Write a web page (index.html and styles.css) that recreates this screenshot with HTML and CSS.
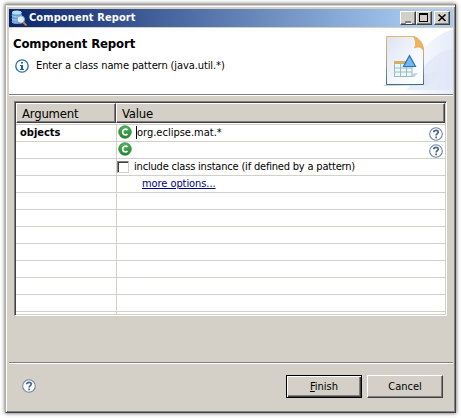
FILE: index.html
```html
<!DOCTYPE html>
<html lang="en">
<head>
<meta charset="utf-8">
<title>Component Report</title>
<link rel="stylesheet" href="styles.css">
</head>
<body>
<svg class="defs" width="0" height="0" aria-hidden="true">
  <defs>
    <linearGradient id="green" x2="0" y2="1"><stop stop-color="#55b35b"/><stop offset="1" stop-color="#238831"/></linearGradient>
    <linearGradient id="paper" x2="1" y2="1"><stop stop-color="#dce3f2"/><stop offset=".6" stop-color="#f6f8fc"/><stop offset="1" stop-color="#fff"/></linearGradient>
    <linearGradient id="edge" x2="0" y2="1"><stop stop-color="#e9b66c"/><stop offset=".5" stop-color="#a8a890"/><stop offset="1" stop-color="#3d7078"/></linearGradient>
    <linearGradient id="sweep" x2="1" y2="0"><stop stop-color="#fff"/><stop offset="1" stop-color="#d9e2f6"/></linearGradient>
    <linearGradient id="shade" x2="1" y2="0"><stop stop-color="#c5c5df"/><stop offset="1" stop-color="#e6ebf8" stop-opacity="0"/></linearGradient>
    <symbol id="class" viewBox="0 0 14 14">
      <circle cx="7" cy="7" r="6.3" fill="url(#green)" stroke="#2b8038" stroke-width=".7"/>
      <path d="M9.4 5C8.4 3.7 4.7 3.6 4.7 7s3.7 3.300 4.700 2" fill="none" stroke="#fff" stroke-width="1.7"/>
    </symbol>
    <symbol id="help" viewBox="0 0 14 14">
      <circle cx="7" cy="7" r="6.300" fill="#fff" stroke="#6d84a5" stroke-width="1.100"/>
      <path d="M4.800 5.300C4.900 2.700 9.300 2.700 9.300 5.100 9.300 6.600 7.100 6.600 7.100 8.600M7.100 9.600v1.700" fill="none" stroke="#48628c" stroke-width="1.700"/>
    </symbol>
  </defs>
</svg>
<main class="window">
  <header class="titlebar">
    <svg class="app-icon" viewBox="0 0 16 16">
      <path d="M1 2.500v9c0 2 9.500 2 9.500 0v-9" fill="#5e9fdd"/>
      <ellipse cx="5.800" cy="2.500" rx="4.800" ry="2" fill="#b5dcf8"/>
      <path d="M1 5.500c0 2 9.500 2 9.500 0M1 8.700c0 2 9.500 2 9.500 0M1 11.700c0 2 9.500 2 9.500 0" fill="none" stroke="#b9dcf6"/>
      <path d="M12.500 12.500l3 3" stroke="#c88743" stroke-width="1.800"/>
      <circle cx="9.800" cy="9.500" r="3.700" fill="#d9efff" stroke="#8a9cad"/>
    </svg>
    <h1 class="caption">Component Report</h1>
    <div class="controls">
      <button class="control" aria-label="Minimize"><svg viewBox="0 0 14 12"><path d="M4 9h6v2H4z" fill="#808080"/><path d="M5 11h6v1H5z" fill="#fff"/></svg></button>
      <button class="control" aria-label="Maximize"><svg viewBox="0 0 14 12"><path d="M2 1h9v9H2zM3 3v6h7V3z" fill="#000" fill-rule="evenodd"/></svg></button>
      <button class="control close" aria-label="Close"><svg viewBox="0 0 14 12"><path d="M3.500 2.500l7 6.500M10.500 2.500l-7 6.500" stroke="#000" stroke-width="1.600"/></svg></button>
    </div>
  </header>
  <section class="banner">
    <div class="banner-text">
      <h2 class="heading">Component Report</h2>
      <div class="message">
        <svg class="info" viewBox="0 0 14 14"><circle cx="7" cy="7" r="6.200" fill="#fff" stroke="#2a69a5" stroke-width="1.300"/><path d="M6 3h2v1.600H6zM5 6h3v4h1v1H5v-1h1V7H5z" fill="#19629f"/></svg>
        <span class="hint">Enter a class name pattern (java.util.*)</span>
      </div>
    </div>
    <svg class="artwork" viewBox="0 0 76 66">
      <path d="M76 1C56 8 38 22 24 66h52z" fill="url(#sweep)" opacity=".65"/>
      <path d="M76 21C60 23 48 34 30 62h46z" fill="#dce4f7" opacity=".6"/>
      <path d="M6 58h44l23-19-23 7-40 10z" fill="url(#shade)"/>
      <path d="M9.500 8.500h27c6 1 10 8 10 14v34h-37z" fill="url(#paper)" stroke="url(#edge)"/>
      <path d="M36.500 8.500c5 2 9.500 7 10 14-2-3-5-4.500-9-2.500 2-4 1-8-1-11.500z" fill="#f3b35b" stroke="#dda052" stroke-width=".6"/>
      <path d="M18 49h19l4-4-7 1z" fill="#c8cbdc"/>
      <path d="M17.500 34.500h18v14h-18z" fill="#eaf8f7"/>
      <path d="M17.500 35v14M23.500 35v14M29.500 35v14M35 35v14M17 40h18M17 44h18M17 48.500h18" stroke="#9abac3" fill="none"/>
      <path d="M17 33h18v3H17z" fill="#d6af65"/>
      <path d="M32.500 27.500l6 11h-12z" fill="#72b7ee" stroke="#2476bd" stroke-width="1.200"/>
    </svg>
  </section>
  <section class="content">
    <div class="table">
      <div class="table-head"><div class="head-cell">Argument</div><div class="head-cell">Value</div></div>
      <div class="row"><div class="cell name">objects</div><div class="cell"><svg class="class-icon"><use href="#class"/></svg><span class="value">org.eclipse.mat.*</span><svg class="help"><use href="#help"/></svg></div></div>
      <div class="row"><div class="cell"></div><div class="cell"><svg class="class-icon"><use href="#class"/></svg><svg class="help"><use href="#help"/></svg></div></div>
      <div class="row"><div class="cell"></div><div class="cell"><span class="checkbox"></span><span class="option">include class instance (if defined by a pattern)</span></div></div>
      <div class="row"><div class="cell"></div><div class="cell"><a class="more">more options...</a></div></div>
      <div class="row"><div class="cell"></div><div class="cell"></div></div>
      <div class="row"><div class="cell"></div><div class="cell"></div></div>
      <div class="row"><div class="cell"></div><div class="cell"></div></div>
      <div class="row"><div class="cell"></div><div class="cell"></div></div>
      <div class="row"><div class="cell"></div><div class="cell"></div></div>
      <div class="row"><div class="cell"></div><div class="cell"></div></div>
      <div class="row"><div class="cell"></div><div class="cell"></div></div>
      <div class="row last"><div class="cell"></div><div class="cell"></div></div>
    </div>
  </section>
  <footer class="footer">
    <svg class="help"><use href="#help"/></svg>
    <div class="actions">
      <button class="button default"><span class="finish"><u>F</u>inish</span></button>
      <button class="button"><span class="cancel">Cancel</span></button>
    </div>
  </footer>
</main>
</body>
</html>
```

FILE: styles.css
```css
* { box-sizing: border-box; }
body {
  margin: 0;
  padding: 4px 5px 5px;
  background: #fff;
  color: #000;
  font: 11px/13px "DejaVu Sans Condensed", "DejaVu Sans", sans-serif;
  overflow: hidden;
}
svg { display: block; flex: none; }
.defs { position: absolute; }
.window {
  width: 451px;
  height: 409px;
  border: 1px solid #404040;
  border-top-color: #a0a0a0;
  border-left-color: #b0aea8;
  background: #d4d0c8;
  box-shadow: inset 1px 0 #fff, inset 0 1px #d4d0c8, inset 0 2px #fff, inset -1px -1px #808080, 0 0 4px #555;
  padding: 4px 2px 2px 3px;
  display: flex;
  flex-direction: column;
}
.titlebar {
  height: 18px;
  flex: none;
  display: flex;
  align-items: center;
  padding: 0 3px 0 2px;
  background: linear-gradient(90deg, #0a246a, #a6caf0 92%);
}
.app-icon { width: 16px; height: 16px; }
.caption { margin: 0 0 0 2px; color: #fff; font-size: 11px; line-height: 16px; font-weight: bold; letter-spacing: .1px; }
.controls { display: flex; margin-left: auto; }
.control {
  width: 16px; height: 14px; padding: 0;
  background: #d4d0c8;
  border: 1px solid;
  border-color: #fff #404040 #404040 #fff;
  box-shadow: inset -1px -1px #808080;
}
.control svg { width: 14px; height: 12px; }
.close { margin-left: 2px; }
.banner {
  height: 68px;
  flex: none;
  margin-top: 1px;
  background: #fff;
  border-bottom: 1px solid #fff;
  box-shadow: inset 0 -1px #808080;
  display: flex;
  justify-content: space-between;
  padding-left: 4px;
}
.heading { margin: 8px 0 0; font-size: 13px; line-height: 16px; letter-spacing: -.13px; white-space: nowrap; }
.message { display: flex; align-items: center; margin-top: 7px; padding-left: 2px; }
.info { width: 14px; height: 14px; }
.hint { margin: -2px 0 0 7px; white-space: nowrap; letter-spacing: -.1px; }
.artwork { width: 76px; height: 66px; }
.content { padding: 5px 6px 0 5px; }
.table {
  width: 433px; height: 215px;
  background: #fff;
  border: 1px solid;
  border-color: #808080 #fff #fff #808080;
  box-shadow: inset 1px 1px #404040, inset -1px -1px #d4d0c8;
  padding: 1px;
}
.table-head { height: 20px; display: grid; grid-template-columns: 100px 1fr; }
.head-cell {
  background: #d4d0c8;
  border: 1px solid;
  border-color: #fff #404040 #404040 #fff;
  box-shadow: inset -1px -1px #808080;
  padding: 1px 0 0 5px;
  font-size: 13px; line-height: 17px;
  letter-spacing: -.2px;
}
.row { height: 17px; display: grid; grid-template-columns: 100px 1fr; }
.row:nth-child(2) { margin-top: 1px; }
.cell { border-top: 1px solid #d4d0c8; display: flex; align-items: center; white-space: nowrap; padding-bottom: 1px; }
.cell + .cell { border-left: 1px solid #d4d0c8; padding-left: 1px; }
.row.last { height: 3px; }
.name { padding: 0 0 2px 4px; font-weight: bold; }
.class-icon { width: 14px; height: 14px; }
.cell .class-icon { align-self: flex-start; }
.value { margin-left: 4px; border-left: 1px solid #000; height: 13px; line-height: 14px; }
.help { width: 14px; height: 14px; }
.cell .help { align-self: flex-start; margin: 2px 2px -1px auto; }
.checkbox {
  width: 12px; height: 12px;
  margin-left: -1px;
  border: 1px solid;
  border-color: #808080 #d4d0c8 #d4d0c8 #808080;
  box-shadow: inset 1px 1px #404040;
}
.option { margin-left: 5px; letter-spacing: -.19px; }
.more { margin-left: 24px; color: #000080; text-decoration: underline; letter-spacing: -.07px; }
.footer {
  margin-top: auto;
  height: 48px;
  border-top: 1px solid #808080;
  box-shadow: inset 0 1px #fff;
  display: flex;
  align-items: center;
  justify-content: space-between;
  padding: 0 10px 1px 13px;
}
.actions { display: flex; gap: 5px; }
.button {
  width: 76px; height: 23px; padding: 0;
  background: #d4d0c8;
  border: 1px solid;
  border-color: #fff #404040 #404040 #fff;
  box-shadow: inset -1px -1px #808080;
  font: inherit; color: #000;
}
.button.default { border-color: #000; box-shadow: inset 1px 1px #fff, inset -1px -1px #404040, inset -2px -2px #808080; }
```
